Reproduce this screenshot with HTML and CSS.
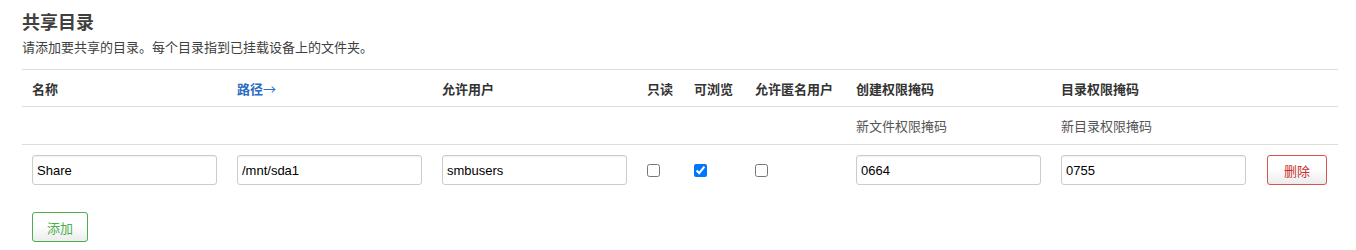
FILE: index.html
```html
<!DOCTYPE html>
<html lang="zh-CN">
<head>
  <meta charset="UTF-8">
  <title>共享目录</title>
  <link rel="stylesheet" href="styles.css">
</head>
<body>
  <div class="section">
    <h3 class="section-title">共享目录</h3>
    <p class="section-desc">请添加要共享的目录。每个目录指到已挂载设备上的文件夹。</p>

    <table class="share-table">
      <colgroup>
        <col style="width: 205px">
        <col style="width: 205px">
        <col style="width: 205px">
        <col style="width: 47px">
        <col style="width: 61px">
        <col style="width: 101px">
        <col style="width: 205px">
        <col style="width: 206px">
        <col style="width: 81px">
      </colgroup>
      <tr class="head-row">
        <th>名称</th>
        <th><a class="sort-link" href="#">路径<span class="arrow">→</span></a></th>
        <th>允许用户</th>
        <th>只读</th>
        <th>可浏览</th>
        <th>允许匿名用户</th>
        <th>创建权限掩码</th>
        <th>目录权限掩码</th>
        <th></th>
      </tr>
      <tr class="desc-row">
        <td></td>
        <td></td>
        <td></td>
        <td></td>
        <td></td>
        <td></td>
        <td>新文件权限掩码</td>
        <td>新目录权限掩码</td>
        <td></td>
      </tr>
      <tr class="data-row">
        <td><input class="text-input" type="text" value="Share"></td>
        <td><input class="text-input" type="text" value="/mnt/sda1"></td>
        <td><input class="text-input" type="text" value="smbusers"></td>
        <td><input class="check" type="checkbox"></td>
        <td><input class="check" type="checkbox" checked></td>
        <td><input class="check" type="checkbox"></td>
        <td><input class="text-input" type="text" value="0664"></td>
        <td><input class="text-input" type="text" value="0755"></td>
        <td><button class="btn btn-remove">删除</button></td>
      </tr>
    </table>

    <div class="add-row">
      <button class="btn btn-add">添加</button>
    </div>
  </div>
</body>
</html>
```

FILE: styles.css
```css
body {
  margin: 0;
  padding: 12px 18px 0 22px;
  font-family: "Liberation Sans", "Noto Sans CJK SC", sans-serif;
  font-size: 13px;
  color: #404040;
  background: #ffffff;
}
.section-title {
  margin: 0;
  font-size: 18px;
  line-height: 22px;
  font-weight: bold;
  color: #404040;
}
.section-desc {
  margin: 5px 0 12px;
  font-size: 13px;
  line-height: 18px;
  color: #404040;
}
.share-table {
  width: 1316px;
  border-collapse: collapse;
  table-layout: fixed;
}
.share-table th,
.share-table td {
  padding: 0 10px;
  text-align: left;
  vertical-align: middle;
  border-top: 1px solid #dddddd;
  white-space: nowrap;
}
.head-row th {
  height: 36px;
  font-weight: bold;
  color: #333333;
}
.desc-row td {
  height: 37px;
  color: #555555;
}
.data-row td {
  padding-top: 10px;
  padding-bottom: 10px;
}
.sort-link {
  color: #2b6cc4;
  text-decoration: none;
}
.arrow {
  font-family: "Noto Sans CJK SC", sans-serif;
  font-weight: normal;
}
.text-input {
  box-sizing: border-box;
  width: 185px;
  height: 30px;
  padding: 4px 6px 4px 4px;
  border: 1px solid #cccccc;
  border-radius: 3px;
  box-shadow: inset 0 1px 1px rgba(0, 0, 0, 0.06);
  font-family: "Liberation Sans", sans-serif;
  font-size: 13px;
  color: #000000;
  background: #ffffff;
}
.check {
  width: 13px;
  height: 13px;
  margin: 3px 0 0;
}
.btn {
  box-sizing: border-box;
  width: 60px;
  height: 30px;
  border-radius: 3px;
  font-family: "Noto Sans CJK SC", sans-serif;
  font-size: 13px;
  background: linear-gradient(to bottom, #ffffff 0%, #ffffff 45%, #ececec 100%);
  cursor: pointer;
}
.btn-remove {
  border: 1px solid #d9534f;
  color: #c9302c;
}
.btn-add {
  width: 56px;
  border: 1px solid #4cae4c;
  color: #4cae4c;
}
.add-row {
  padding: 17px 10px 0;
}
```
